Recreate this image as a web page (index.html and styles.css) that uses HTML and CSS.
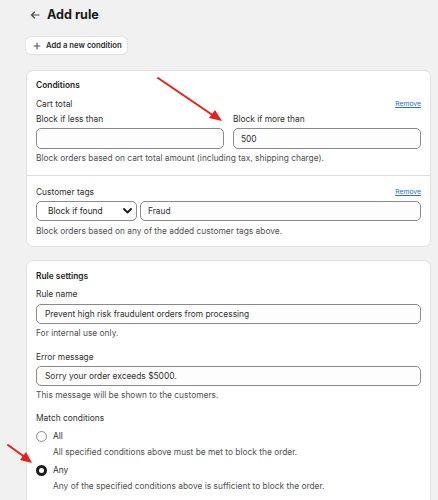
FILE: index.html
```html
<!DOCTYPE html>
<html>
<head>
<meta charset="utf-8">
<link rel="stylesheet" href="styles.css">
</head>
<body>
<div class="page">
  <header class="top">
    <span class="back">
      <svg width="10" height="10" viewBox="0 0 10 10"><path d="M9 5H1.5M4.5 2L1.5 5l3 3" fill="none" stroke="#4a4a4a" stroke-width="1.2" stroke-linecap="round" stroke-linejoin="round"/></svg>
    </span>
    <h1 class="title">Add rule</h1>
  </header>
  <button class="add-btn">
    <svg width="8" height="8" viewBox="0 0 8 8"><path d="M4 1v6M1 4h6" stroke="#4a4a4a" stroke-width="1" stroke-linecap="round"/></svg>
    <span>Add a new condition</span>
  </button>

  <section class="card card-conditions">
    <div class="section">
      <div class="card-title">Conditions</div>
      <div class="row-head"><span>Cart total</span><a class="remove">Remove</a></div>
      <div class="two-col">
        <div class="field">
          <div class="label">Block if less than</div>
          <div class="input"></div>
        </div>
        <div class="field">
          <div class="label">Block if more than</div>
          <div class="input">500</div>
        </div>
      </div>
      <div class="help">Block orders based on cart total amount (including tax, shipping charge).</div>
    </div>
    <div class="section section-tags">
      <div class="row-head row-head-tags"><span>Customer tags</span><a class="remove">Remove</a></div>
      <div class="tag-row">
        <div class="select">
          <span>Block if found</span>
          <svg width="9" height="6" viewBox="0 0 9 6"><path d="M1 1l3.5 3.5L8 1" fill="none" stroke="#1a1a1a" stroke-width="1.8" stroke-linecap="round" stroke-linejoin="round"/></svg>
        </div>
        <div class="input input-grow">Fraud</div>
      </div>
      <div class="help help-tags">Block orders based on any of the added customer tags above.</div>
    </div>
  </section>

  <section class="card card-settings">
    <div class="card-title">Rule settings</div>
    <div class="label label-rn">Rule name</div>
    <div class="input input-long">Prevent high risk fraudulent orders from processing</div>
    <div class="help">For internal use only.</div>
    <div class="label label-em">Error message</div>
    <div class="input input-long input-em">Sorry your order exceeds $5000.</div>
    <div class="help">This message will be shown to the customers.</div>
    <div class="label label-mc">Match conditions</div>
    <div class="radio-row"><span class="radio"></span><span>All</span></div>
    <div class="radio-help">All specified conditions above must be met to block the order.</div>
    <div class="radio-row"><span class="radio radio-on"></span><span>Any</span></div>
    <div class="radio-help">Any of the specified conditions above is sufficient to block the order.</div>
  </section>
</div>

<svg class="annot" width="438" height="500" viewBox="0 0 438 500">
  <line x1="158" y1="78" x2="214" y2="116" stroke="#e6201a" stroke-width="2" stroke-linecap="round"/>
  <polygon points="222,121 209,118 215,110" fill="#e6201a"/>
  <line x1="8" y1="445" x2="26" y2="458" stroke="#e6201a" stroke-width="2" stroke-linecap="round"/>
  <polygon points="32,463 20,460 26,452" fill="#e6201a"/>
</svg>
</body>
</html>
```
FILE: styles.css
```css
* { box-sizing: border-box; }
html, body { margin: 0; padding: 0; }
body {
  background: #f1f1f2;
  font-family: Inter, "Noto Sans", sans-serif;
  font-size: 8.4px;
  line-height: 12px;
  color: #303030;
  width: 438px;
  height: 500px;
  overflow: hidden;
  position: relative;
}
.page { padding: 0 7px 0 26px; }
.top {
  display: flex;
  align-items: center;
  height: 30px;
  padding-left: 4px;
}
.back { display: flex; width: 17px; }
.title {
  margin: 0;
  font-size: 12.6px;
  font-weight: 700;
  color: #1a1a1a;
}
.add-btn {
  margin-top: 7px;
  display: flex;
  align-items: center;
  gap: 5px;
  height: 17px;
  width: 101px;
  padding: 0 0 0 7px;
  background: #fff;
  border: 0;
  border-radius: 5px;
  box-shadow: 0 0 0 1px #e3e3e3, 0 1px 1px rgba(0,0,0,0.15);
  font-family: inherit;
  font-size: 7.7px;
  font-weight: 600;
  color: #2a2a2a;
}
.card {
  background: #fff;
  border: 1px solid #e1e1e1;
  border-radius: 7px;
}
.card-conditions { margin-top: 16px; }
.section { padding: 8px 9px 11px 9px; }
.section-tags { border-top: 1px solid #dedede; padding-top: 10px; padding-bottom: 9px; }
.card-title { font-weight: 600; color: #1e1e1e; }
.row-head {
  display: flex;
  justify-content: space-between;
  align-items: center;
  margin-top: 7px;
}
.row-head-tags { margin-top: 0; }
.remove {
  font-size: 6.8px;
  color: #2c6ecb;
  text-decoration: underline;
}
.two-col { display: flex; gap: 9px; margin-top: 3px; }
.field { flex: 1; }
.label { color: #303030; }
.input {
  margin-top: 3px;
  height: 21px;
  border: 1px solid #8a8a8a;
  border-radius: 5px;
  padding: 0 7px;
  display: flex;
  align-items: center;
  color: #303030;
  background: #fdfdfd;
}
.help { margin-top: 3px; color: #505050; }
.tag-row { display: flex; gap: 3px; margin-top: 3px; }
.select {
  width: 101px;
  height: 20px;
  border: 1px solid #8a8a8a;
  border-radius: 5px;
  display: flex;
  align-items: center;
  justify-content: space-between;
  padding: 0 4px 0 11px;
  color: #1e1e1e;
}
.input-grow { flex: 1; height: 20px; margin-top: 0; }
.help-tags { margin-top: 4px; }
.card-settings {
  margin-top: 13px;
  padding: 9px 9px 20px 9px;
  border-bottom-left-radius: 0;
  border-bottom-right-radius: 0;
}
.label-rn { margin-top: 6px; }
.input-long { height: 20px; margin-top: 4px; padding-left: 8px; }
.label-em { margin-top: 12px; }
.input-em { margin-top: 3px; }
.label-mc { margin-top: 11px; }
.radio-row {
  display: flex;
  align-items: center;
  gap: 6px;
  margin-top: 6px;
  color: #303030;
}
.radio {
  width: 11px;
  height: 11px;
  border-radius: 50%;
  border: 1px solid #8a8a8a;
  background: #fff;
  display: inline-block;
}
.radio-on { border: 3px solid #1a1a1a; }
.radio-help { margin-top: 4px; padding-left: 17px; color: #505050; }
.annot { position: absolute; left: 0; top: 0; pointer-events: none; }
```
